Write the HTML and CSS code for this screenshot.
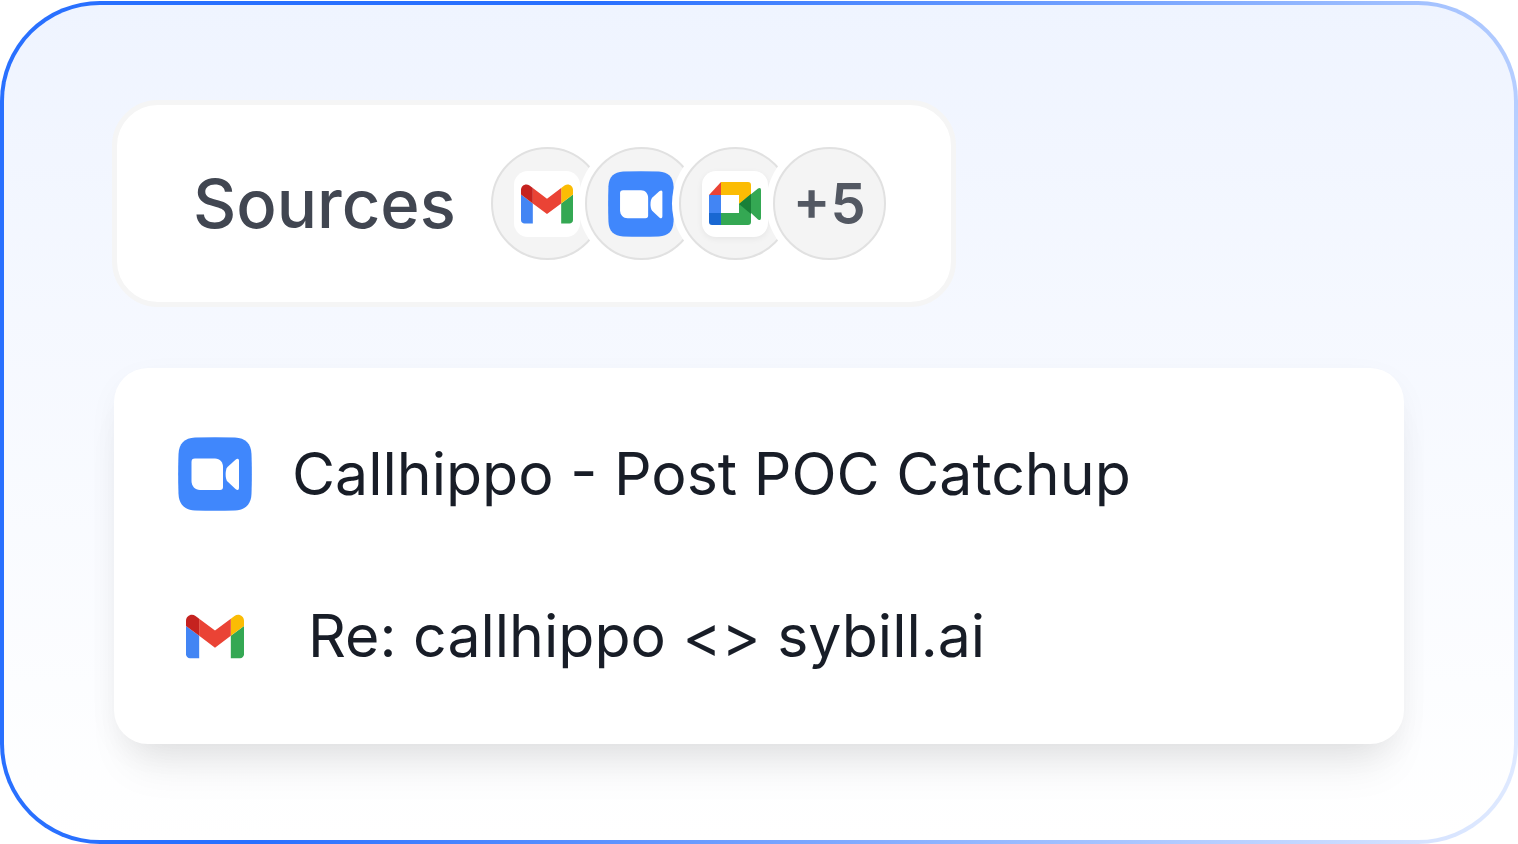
FILE: index.html
```html
<!DOCTYPE html>
<html lang="en">

<head>
    <meta charset="UTF-8">
    <meta name="viewport" content="width=device-width, initial-scale=1.0">
    <title>Sources</title>
    <link rel="stylesheet" href="styles.css">
</head>

<body>
    <!-- shared logos -->
    <svg class="sprite" aria-hidden="true">
        <symbol id="gmail" viewBox="52 42 88 66">
            <path fill="#4285f4" d="M58 108h14V74L52 59v43c0 3.320 2.690 6 6 6" />
            <path fill="#34a853" d="M120 108h14c3.320 0 6-2.690 6-6V59l-20 15" />
            <path fill="#fbbc04" d="M120 48v26l20-15v-8c0-7.420-8.470-11.650-14.400-7.200" />
            <path fill="#ea4335" d="M72 74V48l24 18 24-18v26L96 92" />
            <path fill="#c5221f" d="M52 51v8l20 15V48l-5.600-4.200c-5.940-4.450-14.400-.22-14.400 7.200" />
        </symbol>
        <symbol id="zoom" viewBox="0 0 74 74">
            <path fill="#4087fc" d="M17 .5Q37-.2 57 .5C67.500 1 73 6.500 73.500 17Q74.200 37 73.500 57C73 67.500 67.500 73 57 73.500Q37 74.200 17 73.500C6.500 73 1 67.500.5 57Q-.2 37 .5 17C1 6.500 6.500 1 17 .5z" />
            <path fill="#fff" d="M17 21.500h20c5 0 8 4 8 8.500v20c0 2-1 3-3 3H22c-5 0-8.500-4-8.500-9V25c0-2.500 1-3.500 3.500-3.500z" />
            <path fill="#fff" d="M49.500 30 57.500 22.800C60 20.800 61 22 61 24v26c0 3-1 4-3.500 2L49.500 44.500c-2.500-3-2.500-11.500 0-14.500z" />
        </symbol>
        <symbol id="meet" viewBox="0 0 52 43">
            <path fill="#ea4335" d="M0 13 12 0v13z" />
            <path fill="#4285f4" d="M0 13h12v18H0z" />
            <path fill="#1967d2" d="M0 31h12v12H3q-3 0-3-3z" />
            <path fill="#fbbc04" d="M12 0h27q3 0 3 3v10L30 22v-9H12z" />
            <path fill="#34a853" d="M12 31h18v-9l19-15.500q3-1.500 3 1.500v28q0 3-3 1.500L42 31v9q0 3-3 3H12z" />
            <path fill="#188038" d="m30 22 12-10v20z" />
        </symbol>
    </svg>

    <main class="panel">
        <section class="sources">
            <h1 class="sources-title">Sources</h1>
            <div class="avatars">
                <div class="avatar">
                    <span class="tile"><svg class="gmail" role="img" aria-label="Gmail"><use href="#gmail" /></svg></span>
                </div>
                <div class="avatar">
                    <svg class="zoom" role="img" aria-label="Zoom"><use href="#zoom" /></svg>
                </div>
                <div class="avatar">
                    <span class="tile tile-shadow"><svg class="meet" role="img" aria-label="Google Meet"><use href="#meet" /></svg></span>
                </div>
                <div class="avatar more">+5</div>
            </div>
        </section>

        <ul class="results">
            <li class="result">
                <svg class="result-zoom" role="img" aria-label="Zoom"><use href="#zoom" /></svg>
                <span>Callhippo - Post POC Catchup</span>
            </li>
            <li class="result mail">
                <svg class="result-gmail" role="img" aria-label="Gmail"><use href="#gmail" /></svg>
                <span>Re: callhippo &lt;&gt; sybill.ai</span>
            </li>
        </ul>
    </main>
</body>

</html>
```

FILE: styles.css
```css
* {
    box-sizing: border-box;
}

body {
    margin: 0;
    padding-top: 1px;
    background-color: white;
    font-family: Inter, "Liberation Sans", sans-serif;
}

.sprite {
    display: none;
}

/* gradient fill with a gradient border */
.panel {
    min-height: calc(100vh - 1px);
    padding: 95px 110px;
    border: 4px solid transparent;
    border-radius: 100px;
    background:
        linear-gradient(#eff4ff, #ffffff) padding-box,
        linear-gradient(112deg, #2970ff 32%, #e3ecff) border-box;
}

.sources {
    display: flex;
    align-items: center;
    gap: 35px;
    width: fit-content;
    height: 207px;
    margin-left: -2px;
    padding: 0 65px 0 76px;
    border: 5px solid #f5f5f5;
    border-radius: 46px;
    background-color: white;
}

.sources-title {
    margin: 0;
    font-size: 67px;
    line-height: 96px;
    font-weight: 500;
    color: #414651;
}

.avatars {
    display: flex;
}

.avatar {
    display: flex;
    align-items: center;
    justify-content: center;
    width: 113px;
    height: 113px;
    margin-left: -19px;
    border: 2px solid #e1e1e1;
    border-radius: 50%;
    background-color: #f4f4f4;
    box-shadow: 0 0 0 7px white;
}

.avatar:first-child {
    margin-left: 0;
}

.tile {
    display: flex;
    align-items: center;
    justify-content: center;
    width: 66px;
    height: 66px;
    border-radius: 14px;
    background-color: white;
}

.tile-shadow {
    box-shadow: 0 2px 6px rgba(0, 0, 0, 0.06);
}

.gmail {
    width: 52px;
    height: 40px;
}

.zoom {
    width: 66px;
    height: 66px;
}

.meet {
    width: 52px;
    height: 43px;
}

.more {
    font-size: 56px;
    font-weight: 600;
    color: #535862;
}

.results {
    display: flex;
    flex-direction: column;
    gap: 72px;
    margin: 61px 0 0;
    padding: 61px 64px 63px;
    border-radius: 34px;
    background-color: white;
    box-shadow:
        0 36px 44px -16px rgba(10, 16, 18, 0.08),
        0 10px 36px -8px rgba(10, 16, 18, 0.07);
    list-style: none;
}

.result {
    display: flex;
    align-items: center;
    gap: 40px;
    font-size: 59px;
    line-height: 90px;
    color: #181d27;
}

.mail {
    gap: 64px;
    padding-left: 8px;
}

.result-zoom {
    width: 74px;
    height: 74px;
}

.result-gmail {
    width: 58px;
    height: 45px;
}
```
